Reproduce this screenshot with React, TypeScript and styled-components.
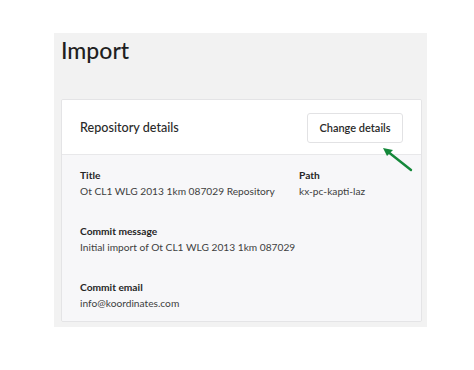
import styled, { createGlobalStyle } from 'styled-components';

const GlobalStyle = createGlobalStyle`
  body {
    margin: 0;
    background: #ffffff;
    font-family: Lato, 'Open Sans', sans-serif;
    color: #222;
  }
`;

const Page = styled.div`
  position: relative;
  width: 474px;
  height: 370px;
  padding: 33px 0 0 54px;
  box-sizing: border-box;
`;

const Panel = styled.div`
  width: 373px;
  height: 294px;
  box-sizing: border-box;
  padding: 0 5px 5px 7px;
  background: #f2f2f2;
  display: flex;
  flex-direction: column;
`;

const Heading = styled.h1`
  margin: 0;
  height: 66px;
  padding-top: 3px;
  box-sizing: border-box;
  font-size: 23px;
  line-height: 28px;
  font-weight: 500;
  color: #1f1f1f;
`;

const Card = styled.section`
  flex: 1;
  display: flex;
  flex-direction: column;
  border: 1px solid #e4e4e6;
  border-radius: 2px;
  overflow: hidden;
`;

const CardHeader = styled.header`
  height: 54px;
  display: flex;
  align-items: center;
  justify-content: space-between;
  padding: 0 18px 0 18px;
  background: #ffffff;
  border-bottom: 1px solid #e8e8ea;
`;

const CardTitle = styled.h2`
  margin: 0;
  font-size: 12.6px;
  font-weight: 500;
  color: #2a2a2a;
`;

const Button = styled.button`
  width: 96px;
  height: 30px;
  margin-top: 1px;
  background: #ffffff;
  border: 1px solid #e2e2e4;
  border-radius: 3px;
  font-family: inherit;
  font-size: 11px;
  font-weight: 600;
  color: #2a2a2a;
  cursor: pointer;
`;

const CardBody = styled.div`
  flex: 1;
  display: grid;
  grid-template-columns: 219px 1fr;
  align-content: start;
  row-gap: 24px;
  padding: 12px 18px 0 18px;
  background: #f7f7f9;
`;

const Field = styled.div<{ $wide?: boolean }>`
  grid-column: ${(p) => (p.$wide ? '1 / span 2' : 'auto')};
`;

const Label = styled.div`
  font-size: 10.2px;
  line-height: 16px;
  font-weight: 700;
  color: #262626;
`;

const Value = styled.div`
  font-size: 10.2px;
  line-height: 16px;
  color: #3e3e3e;
`;

const Arrow = styled.svg`
  position: absolute;
  left: 378px;
  top: 142px;
`;

export default function App() {
  return (
    <Page>
      <GlobalStyle />
      <Panel>
        <Heading>Import</Heading>
        <Card>
          <CardHeader>
            <CardTitle>Repository details</CardTitle>
            <Button>Change details</Button>
          </CardHeader>
          <CardBody>
            <Field>
              <Label>Title</Label>
              <Value>Ot CL1 WLG 2013 1km 087029 Repository</Value>
            </Field>
            <Field>
              <Label>Path</Label>
              <Value>kx-pc-kapti-laz</Value>
            </Field>
            <Field $wide>
              <Label>Commit message</Label>
              <Value>Initial import of Ot CL1 WLG 2013 1km 087029</Value>
            </Field>
            <Field $wide>
              <Label>Commit email</Label>
              <Value>info@koordinates.com</Value>
            </Field>
          </CardBody>
        </Card>
      </Panel>
      <Arrow width="40" height="34" viewBox="0 0 40 34">
        <line x1="33" y1="28" x2="9" y2="9" stroke="#14883a" strokeWidth="2.4" strokeLinecap="round" />
        <polygon points="5,6 15,8 9,14" fill="#14883a" />
      </Arrow>
    </Page>
  );
}
